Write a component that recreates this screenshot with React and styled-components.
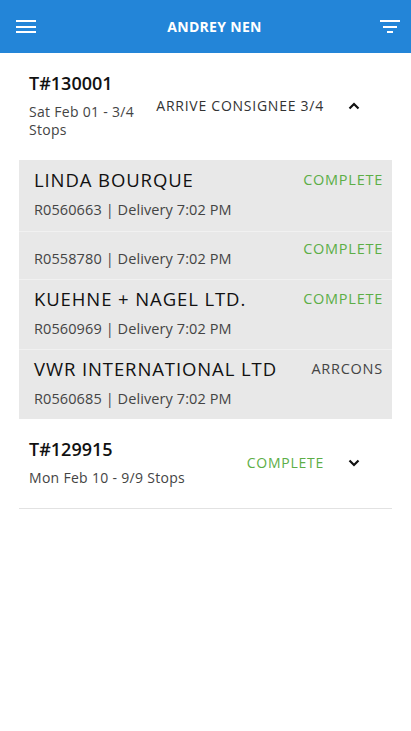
import React from "react";
import styled, { createGlobalStyle } from "styled-components";

const Global = createGlobalStyle`
  body {
    margin: 0;
    background: #ffffff;
    font-family: "Open Sans", "Liberation Sans", sans-serif;
  }
`;

const Page = styled.div`
  width: 411px;
  min-height: 731px;
  background: #ffffff;
`;

const Topbar = styled.header`
  height: 53px;
  background: #2385d8;
  display: flex;
  align-items: center;
`;

const IconSlot = styled.div`
  width: ${(p) => p.w}px;
  height: 53px;
  display: flex;
  align-items: center;
  padding: ${(p) => p.pad || "0"};
  box-sizing: border-box;
`;

const Title = styled.h1`
  flex: 1;
  margin: 0;
  text-align: center;
  color: #ffffff;
  font-size: 14px;
  font-weight: 700;
  letter-spacing: 0.3px;
`;

const List = styled.main`
  padding: 0 19px;
`;

const Trip = styled.section`
  border-bottom: ${(p) => (p.open ? "none" : "1px solid #e2e2e2")};
`;

const TripHead = styled.div`
  display: flex;
  align-items: center;
  padding: 19px 0 21px 10px;
`;

const TripInfo = styled.div`
  flex: 1;
  min-width: 0;
`;

const TripNo = styled.div`
  font-size: 18px;
  line-height: 22px;
  font-weight: 600;
  color: #111111;
  margin-bottom: 9px;
`;

const TripSub = styled.div`
  font-size: 14px;
  line-height: 18px;
  letter-spacing: 0.3px;
  color: #444444;
  padding-right: 8px;
`;

const TripStatus = styled.div`
  font-size: 14px;
  line-height: 18px;
  letter-spacing: 0.75px;
  color: ${(p) => (p.done ? "#5cae46" : "#333333")};
  white-space: nowrap;
`;

const Toggle = styled.div`
  width: 40px;
  margin-left: 10px;
  margin-right: 18px;
  display: flex;
  justify-content: center;
  align-items: center;
`;

const Stops = styled.div`
  background: #e8e8e8;
`;

const Stop = styled.div`
  display: flex;
  align-items: flex-start;
  padding: ${(p) => (p.noName ? "18px" : "9px")} 9px 10px 15px;
  &:first-child {
    padding-bottom: 11px;
  }
  & + & {
    box-shadow: inset 0 1px 0 #f1f1f1;
  }
`;

const StopInfo = styled.div`
  flex: 1;
  min-width: 0;
`;

const StopName = styled.div`
  font-size: 18.5px;
  line-height: 22px;
  font-weight: 500;
  letter-spacing: 0.9px;
  color: #111111;
  margin-bottom: 9px;
`;

const StopSub = styled.div`
  font-size: 14.5px;
  line-height: 20px;
  letter-spacing: 0.1px;
  color: #444444;
`;

const StopStatus = styled.div`
  font-size: 14.5px;
  line-height: 20px;
  letter-spacing: 0.75px;
  margin-top: ${(p) => (p.noName ? "-10px" : "1px")};
  color: ${(p) => (p.done ? "#5cae46" : "#444444")};
`;

const Menu = () => (
  <svg width="20" height="14" viewBox="0 0 20 14">
    <rect x="0" y="0" width="20" height="2" fill="#fff" />
    <rect x="0" y="6" width="20" height="2" fill="#fff" />
    <rect x="0" y="11" width="20" height="2" fill="#fff" />
  </svg>
);

const Filter = () => (
  <svg width="20" height="14" viewBox="0 0 20 14">
    <rect x="0" y="0" width="20" height="2" fill="#fff" />
    <rect x="3" y="6" width="14" height="2" fill="#fff" />
    <rect x="7" y="11" width="6" height="2" fill="#fff" />
  </svg>
);

const Chevron = ({ up }) => (
  <svg width="12" height="8" viewBox="0 0 12 8">
    <path
      d={up ? "M1.5 6.5 L6 2 L10.5 6.5" : "M1.5 1.5 L6 6 L10.5 1.5"}
      fill="none"
      stroke="#111"
      strokeWidth="2.2"
    />
  </svg>
);

const trips = [
  {
    id: "T#130001",
    sub: "Sat Feb 01 - 3/4 Stops",
    status: "ARRIVE CONSIGNEE 3/4",
    open: true,
    stops: [
      { name: "LINDA BOURQUE", ref: "R0560663", status: "COMPLETE" },
      { name: "", ref: "R0558780", status: "COMPLETE" },
      { name: "KUEHNE + NAGEL LTD.", ref: "R0560969", status: "COMPLETE" },
      { name: "VWR INTERNATIONAL LTD", ref: "R0560685", status: "ARRCONS" },
    ],
  },
  {
    id: "T#129915",
    sub: "Mon Feb 10 - 9/9 Stops",
    status: "COMPLETE",
    open: false,
    stops: [],
  },
];

export default function App() {
  return (
    <Page>
      <Global />
      <Topbar>
        <IconSlot w={60} pad="0 0 0 16px">
          <Menu />
        </IconSlot>
        <Title>ANDREY NEN</Title>
        <IconSlot w={42} pad="0 0 0 11px">
          <Filter />
        </IconSlot>
      </Topbar>
      <List>
        {trips.map((t) => (
          <Trip key={t.id} open={t.open}>
            <TripHead>
              <TripInfo>
                <TripNo>{t.id}</TripNo>
                <TripSub>{t.sub}</TripSub>
              </TripInfo>
              <TripStatus done={t.status === "COMPLETE"}>{t.status}</TripStatus>
              <Toggle>
                <Chevron up={t.open} />
              </Toggle>
            </TripHead>
            {t.open && (
              <Stops>
                {t.stops.map((s) => (
                  <Stop key={s.ref} noName={!s.name}>
                    <StopInfo>
                      {s.name && <StopName>{s.name}</StopName>}
                      <StopSub>{s.ref} | Delivery 7:02 PM</StopSub>
                    </StopInfo>
                    <StopStatus noName={!s.name} done={s.status === "COMPLETE"}>
                      {s.status}
                    </StopStatus>
                  </Stop>
                ))}
              </Stops>
            )}
          </Trip>
        ))}
      </List>
    </Page>
  );
}
